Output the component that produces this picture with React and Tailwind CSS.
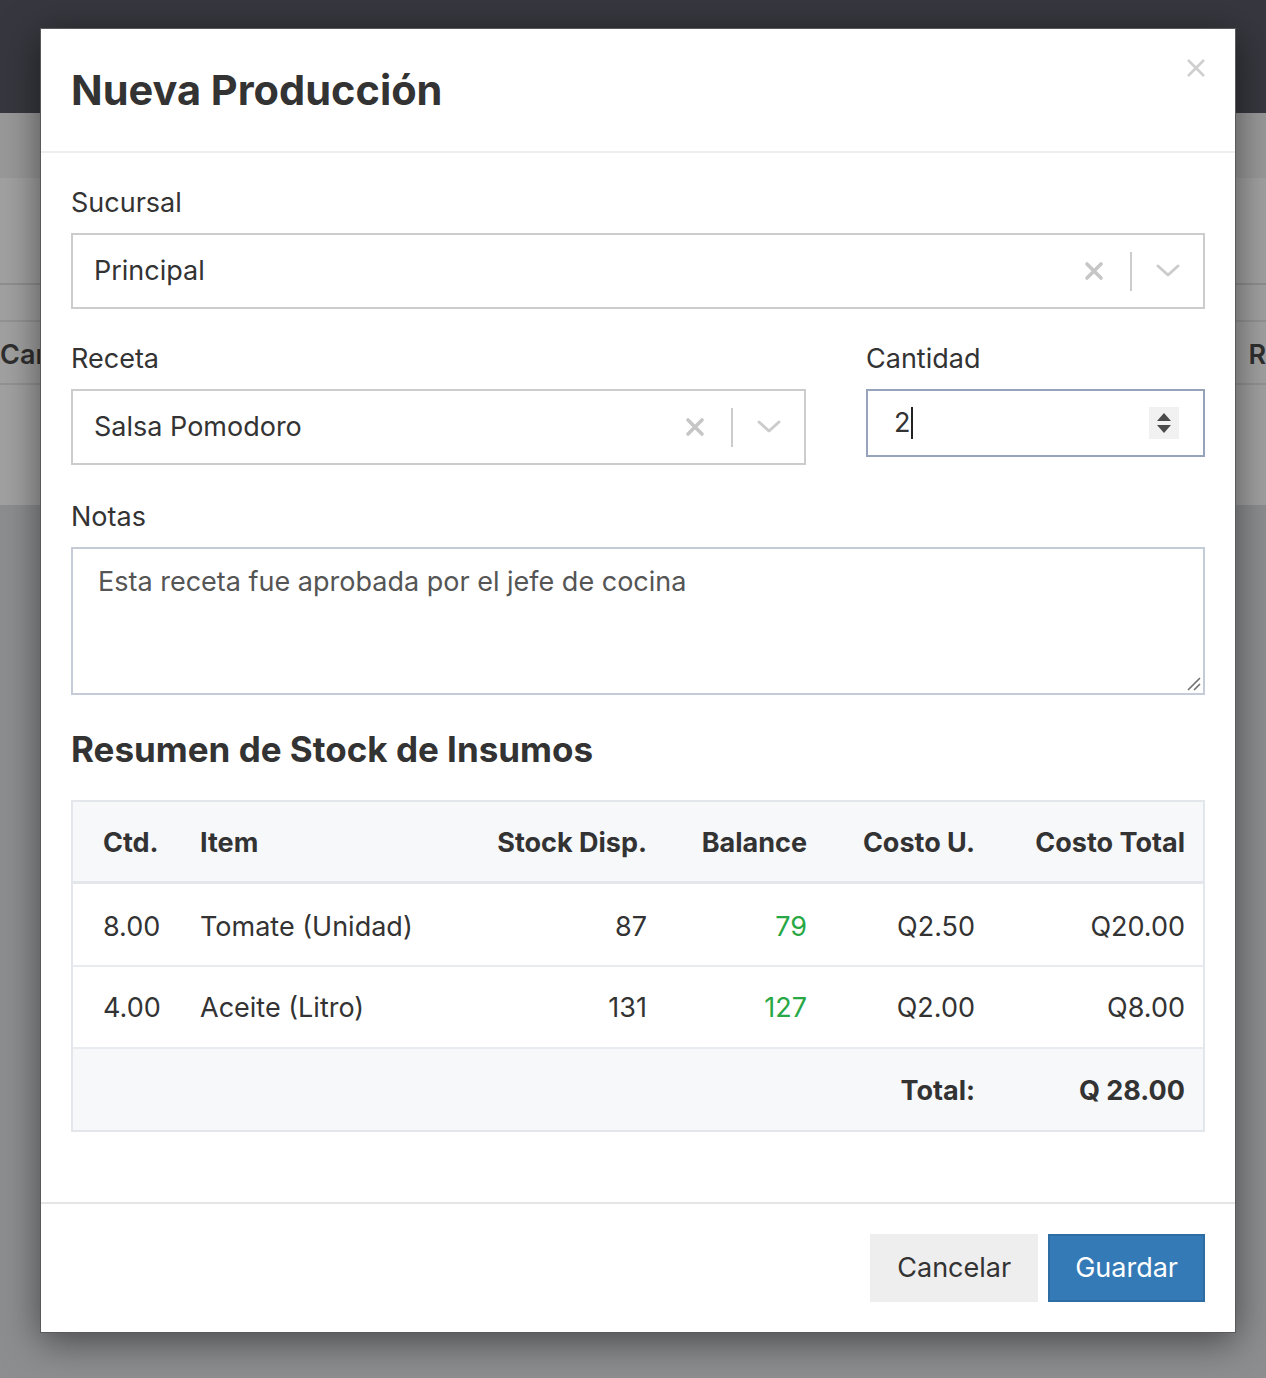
import React, { useState } from 'react';

const ClearIcon = () => (
  <svg width="20" height="20" viewBox="0 0 20 20" className="shrink-0">
    <path d="M3 3L17 17M17 3L3 17" stroke="#c6c6c6" strokeWidth="3.6" strokeLinecap="round" />
  </svg>
);

const ChevronIcon = () => (
  <svg width="24" height="14" viewBox="0 0 24 14" className="shrink-0">
    <path d="M2 2L12 11L22 2" stroke="#cccccc" strokeWidth="3" fill="none" strokeLinecap="round" strokeLinejoin="round" />
  </svg>
);

const SelectBox = ({ value }) => (
  <div className="flex h-[76px] items-center border-2 border-[#cccccc] bg-white pl-[21px] pr-[23px]">
    <span className="flex-1 text-[27px] text-[#333333]">{value}</span>
    <ClearIcon />
    <span className="ml-[26px] mr-[24px] h-[39px] w-[2px] bg-[#cccccc]" />
    <ChevronIcon />
  </div>
);

const rows = [
  { qty: '8.00', item: 'Tomate (Unidad)', stock: '87', balance: '79', unit: 'Q2.50', total: 'Q20.00' },
  { qty: '4.00', item: 'Aceite (Litro)', stock: '131', balance: '127', unit: 'Q2.00', total: 'Q8.00' },
];

const cols = 'grid grid-cols-[97px_287px_160px_160px_168px_210px] items-center pl-[30px] pr-[20px]';

const App = () => {
  const [notas, setNotas] = useState('Esta receta fue aprobada por el jefe de cocina');

  return (
    <div className="relative min-h-[1378px] overflow-hidden bg-[#8d8e90] font-['Inter',sans-serif]">
      {/* Page behind the backdrop */}
      <div className="h-[113px] bg-[#37383f]" />
      <div className="h-[65px] bg-[#999999]" />
      <div className="bg-[#a1a1a1]">
        <div className="h-[107px] border-b-2 border-[#8f8f8f]" />
        <div className="h-[37px] border-b-2 border-[#939393]" />
        <div className="flex h-[63px] items-center justify-between border-b-2 border-[#939393] pt-[6px] text-[27px] font-semibold text-[#2f2f2f]">
          <span className="w-[40px] overflow-hidden whitespace-nowrap">Cantidad</span>
          <span>R</span>
        </div>
        <div className="h-[120px]" />
      </div>

      {/* Modal */}
      <div className="absolute inset-0 pl-[40px] pt-[28px]">
        <div className="relative h-fit w-[1196px] border border-[#5a5a5a] bg-white shadow-[0_8px_36px_rgba(0,0,0,0.5)]">
          <div className="flex h-[124px] items-center border-b-2 border-[#eeeeee] px-[30px]">
            <h4 className="text-[41.5px] font-bold text-[#333333]">Nueva Producción</h4>
            <button className="absolute right-[29px] top-[29px]">
              <svg width="20" height="20" viewBox="0 0 20 20">
                <path d="M2 2L18 18M18 2L2 18" stroke="#cfcfcf" strokeWidth="2.6" />
              </svg>
            </button>
          </div>

          <div className="px-[30px] pb-[70px] pt-[31px]">
            <label className="mb-[11px] block text-[27px] leading-[38px] text-[#333333]">Sucursal</label>
            <SelectBox value="Principal" />

            <div className="mt-[31px] flex gap-[60px]">
              <div className="flex-1">
                <label className="mb-[11px] block text-[27px] leading-[38px] text-[#333333]">Receta</label>
                <SelectBox value="Salsa Pomodoro" />
              </div>
              <div className="w-[339px]">
                <label className="mb-[11px] block text-[27px] leading-[38px] text-[#333333]">Cantidad</label>
                <div className="flex h-[68px] items-center border-2 border-[#97a3ba] bg-white pl-[26px] pr-[24px]">
                  <div className="flex flex-1 items-center text-[27px] text-[#333333]">
                    <span>2</span>
                    <span className="ml-[1px] h-[32px] w-[2px] bg-[#222222]" />
                  </div>
                  <div className="flex h-[32px] w-[30px] flex-col items-center justify-center gap-[4px] bg-[#f1f1f1]">
                    <span className="h-0 w-0 border-x-[7px] border-b-[8px] border-x-transparent border-b-[#4a4a4a]" />
                    <span className="h-0 w-0 border-x-[7px] border-t-[8px] border-x-transparent border-t-[#4a4a4a]" />
                  </div>
                </div>
              </div>
            </div>

            <label className="mb-[11px] mt-[33px] block text-[27px] leading-[38px] text-[#333333]">Notas</label>
            <div className="relative">
              <textarea
                value={notas}
                onChange={(e) => setNotas(e.target.value)}
                className="block h-[148px] w-full resize-none border-2 border-[#c5ccd8] px-[25px] py-[14px] text-[27px] leading-[38px] text-[#555555] outline-none"
              />
              <svg width="16" height="16" viewBox="0 0 16 16" className="pointer-events-none absolute bottom-[3px] right-[3px]">
                <path d="M14 2L2 14M14 8L8 14" stroke="#6f6f6f" strokeWidth="1.6" />
              </svg>
            </div>

            <h4 className="mt-[34px] text-[35px] font-bold leading-[40px] text-[#333333]">
              Resumen de Stock de Insumos
            </h4>

            <div className="mt-[31px] border-2 border-[#e3e7eb] text-[27px] text-[#333333]">
              <div className={`${cols} h-[82px] border-b-[3px] border-[#e3e7eb] bg-[#f7f8fa] pt-[3px] font-bold`}>
                <span>Ctd.</span>
                <span>Item</span>
                <span className="text-right">Stock Disp.</span>
                <span className="text-right">Balance</span>
                <span className="text-right">Costo U.</span>
                <span className="text-right">Costo Total</span>
              </div>
              {rows.map((r, i) => (
                <div key={r.item} className={`${cols} ${i === 0 ? 'h-[83px] pt-[6px]' : 'h-[82px] pt-[3px]'} border-b-2 border-[#e8ebef]`}>
                  <span>{r.qty}</span>
                  <span>{r.item}</span>
                  <span className="text-right">{r.stock}</span>
                  <span className="text-right text-[#28a745]">{r.balance}</span>
                  <span className="text-right">{r.unit}</span>
                  <span className="text-right">{r.total}</span>
                </div>
              ))}
              <div className={`${cols} h-[81px] bg-[#f7f8fa] pt-[3px] font-bold`}>
                <span />
                <span />
                <span />
                <span />
                <span className="text-right">Total:</span>
                <span className="text-right">Q 28.00</span>
              </div>
            </div>
          </div>

          <div className="flex justify-end gap-[10px] border-t-2 border-[#e5e5e5] px-[30px] py-[30px]">
            <button className="h-[68px] bg-[#eeeeee] px-[27px] text-[27px] text-[#333333]">Cancelar</button>
            <button className="h-[68px] border-2 border-[#2e6da4] bg-[#337ab7] px-[25px] text-[27px] text-white">Guardar</button>
          </div>
        </div>
      </div>
    </div>
  );
};

export default App;
